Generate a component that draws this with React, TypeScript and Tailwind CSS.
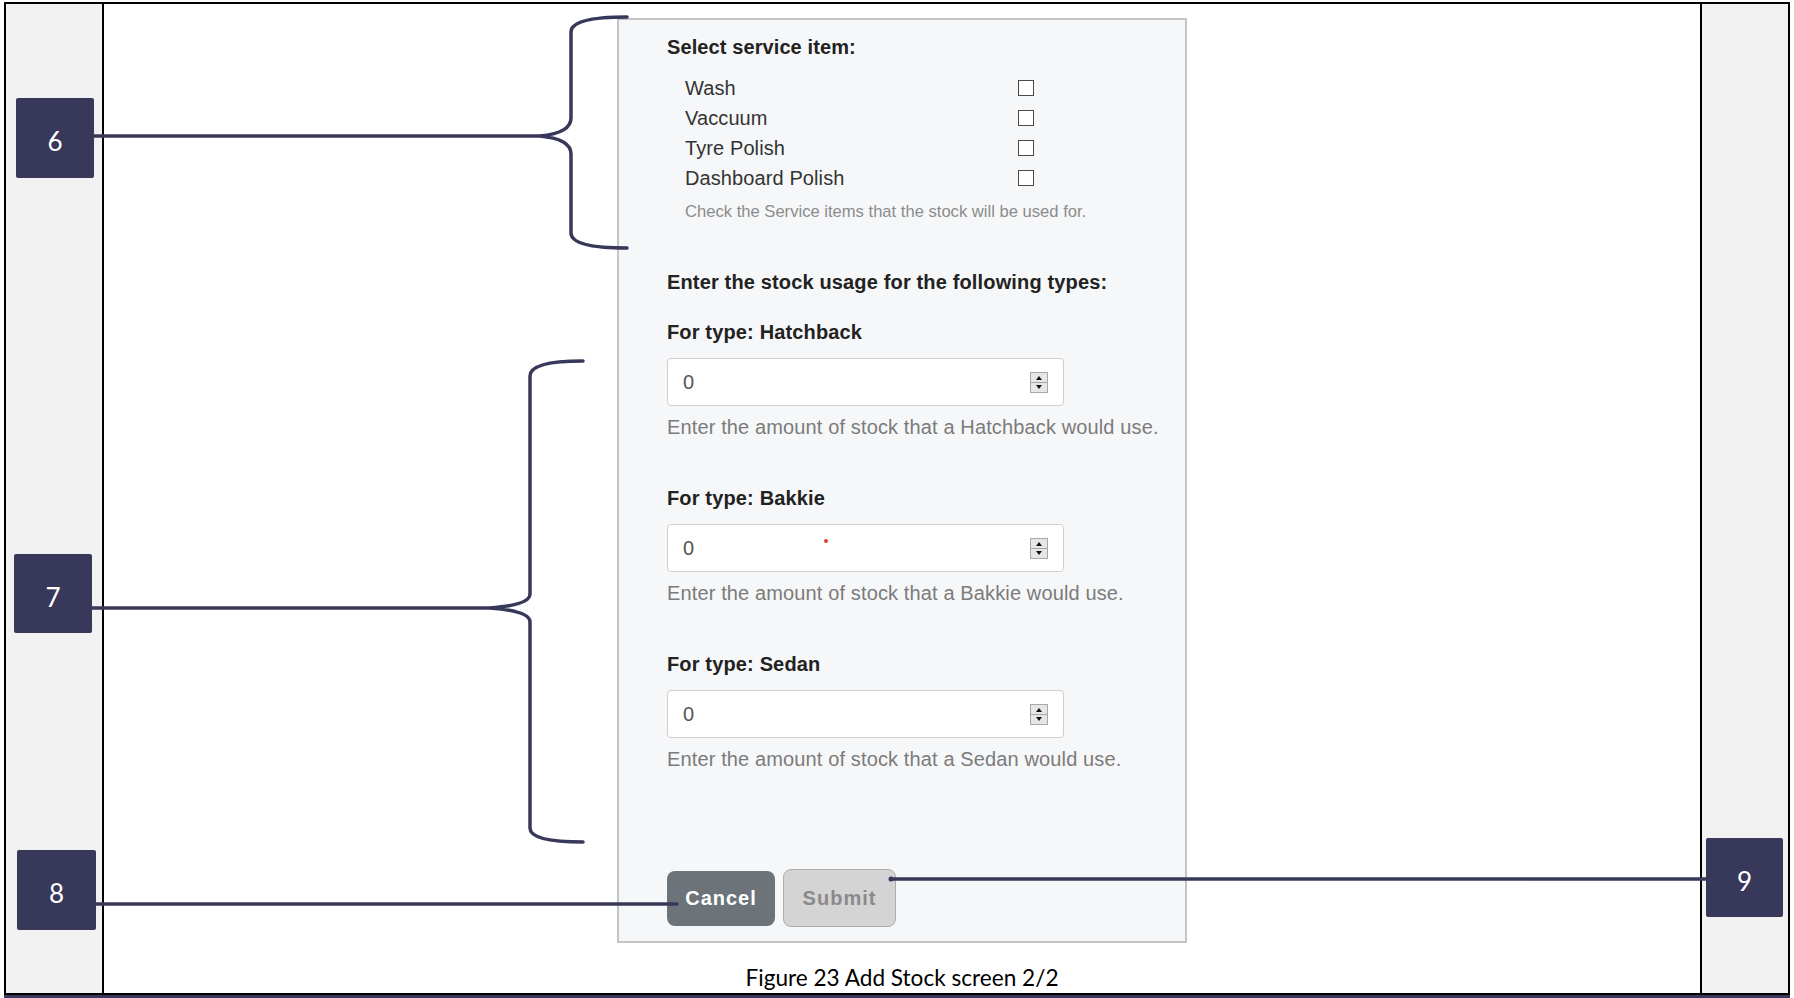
import React from "react";

const NAVY = "#37385a";

function Spinner() {
  return (
    <svg width="18" height="21" viewBox="0 0 18 21" className="block">
      <rect x="0.5" y="0.5" width="17" height="20" fill="#e6e6e6" stroke="#a8a8a8" />
      <line x1="1" y1="10.5" x2="17" y2="10.5" stroke="#a8a8a8" />
      <polygon points="6,8 12,8 9,4" fill="#111" />
      <polygon points="6,13 12,13 9,17" fill="#111" />
    </svg>
  );
}

function NumberField({ dot }: { dot?: boolean }) {
  return (
    <div className="relative w-[397px] h-[48px] border border-[#cfcfcf] rounded-[4px] bg-white flex items-center justify-between pl-[15px] pr-[15px]">
      <span className="text-[20px] text-[#555]">0</span>
      <Spinner />
      {dot && <span className="absolute left-[156px] top-[14px] w-[4px] h-[4px] rounded-full bg-[#d9402b]" />}
    </div>
  );
}

function Section({ type, mt }: { type: string; mt: string }) {
  return (
    <div className={mt}>
      <div className="h-[30px] leading-[30px] text-[20px] font-bold text-[#222] tracking-[0.15px]">For type: {type}</div>
      <div className="mt-[11px]">
        <NumberField dot={type === "Bakkie"} />
      </div>
      <div className="mt-[6px] h-[30px] leading-[30px] text-[20px] text-[#7b7b7b] whitespace-nowrap tracking-[0.13px]">
        Enter the amount of stock that a {type} would use.
      </div>
    </div>
  );
}

function Box({ n, cls }: { n: string; cls: string }) {
  return (
    <div
      className={`absolute flex items-center justify-center rounded-[2px] bg-[#37385a] text-white text-[26px] pt-[7px] font-['Lato'] ${cls}`}
    >
      {n}
    </div>
  );
}

export default function App() {
  const items = ["Wash", "Vaccuum", "Tyre Polish", "Dashboard Polish"];
  return (
    <div className="relative w-[1794px] h-[998px] bg-white overflow-hidden font-['Liberation_Sans',Arial,sans-serif]">
      <div className="pt-[2px] pl-[4px] w-[1790px]">
        <div className="h-[993px] border-2 border-black flex">
          <div className="w-[98px] h-full bg-[#f2f2f2] border-r-2 border-black" />
          <div className="flex-1 h-full flex flex-col items-center">
            <div className="mt-[14px] w-[570px] h-[925px] border-2 border-[#c4c4c4] bg-[#f6f7f8] pl-[48px] pt-[12px]">
              <div className="h-[30px] leading-[30px] text-[20px] font-bold text-[#222] tracking-[0.1px]">Select service item:</div>
              <div className="mt-[11px] pl-[18px]">
                {items.map((it) => (
                  <div key={it} className="h-[30px] flex items-center">
                    <span className="w-[333px] text-[20px] text-[#333] leading-[30px] tracking-[0.1px]">{it}</span>
                    <span className="w-[16px] h-[16px] border-[1.5px] border-[#4a4a4a] bg-white" />
                  </div>
                ))}
                <div className="mt-[8px] h-[22px] leading-[22px] text-[16.6px] text-[#8c8c8c] whitespace-nowrap">
                  Check the Service items that the stock will be used for.
                </div>
              </div>
              <div className="mt-[44px] h-[30px] leading-[30px] text-[20px] font-bold text-[#222] tracking-[0.15px] whitespace-nowrap">
                Enter the stock usage for the following types:
              </div>
              <Section type="Hatchback" mt="mt-[20px]" />
              <Section type="Bakkie" mt="mt-[41px]" />
              <Section type="Sedan" mt="mt-[41px]" />
              <div className="mt-[95px] h-[58px] flex items-center gap-[8px]">
                <button className="w-[108px] h-[55px] rounded-[8px] bg-[#6c7479] text-white font-bold text-[20px] tracking-[1px]">
                  Cancel
                </button>
                <button className="w-[113px] h-[58px] rounded-[8px] bg-[#d4d4d4] border border-[#adadad] text-[#8a8a8a] font-bold text-[20px] tracking-[1px]">
                  Submit
                </button>
              </div>
            </div>
            <div className="mt-[21px] h-[28px] leading-[28px] text-[22.6px] text-black font-['Lato'] whitespace-nowrap">
              Figure 23 Add Stock screen 2/2
            </div>
          </div>
          <div className="w-[88px] h-full bg-[#f2f2f2] border-l-2 border-black" />
        </div>
      </div>
      <div className="ml-[4px] w-[1786px] h-[3px] bg-[#37385a]" />

      <svg className="absolute left-0 top-0 pointer-events-none" width="1794" height="998" viewBox="0 0 1794 998">
        <g fill="none" stroke={NAVY} strokeWidth="3.5" strokeLinecap="round">
          <path d="M94 136 L540 136" />
          <path d="M627 17 Q571 17 571 32 L571 118 Q571 133 540 136 Q571 139 571 154 L571 233 Q571 248 627 248" />
          <path d="M92 608 L490 608" />
          <path d="M583 361 Q530 361 530 376 L530 594 Q530 605 490 608 Q530 611 530 622 L530 828 Q530 842 583 842" />
          <path d="M96 904 L677 904" />
          <path d="M891 879 L1706 879" />
        </g>
        <circle cx="891" cy="879" r="2.5" fill={NAVY} />
      </svg>

      <Box n="6" cls="left-[16px] top-[98px] w-[78px] h-[80px]" />
      <Box n="7" cls="left-[14px] top-[554px] w-[78px] h-[79px]" />
      <Box n="8" cls="left-[17px] top-[850px] w-[79px] h-[80px]" />
      <Box n="9" cls="left-[1706px] top-[838px] w-[77px] h-[79px]" />
    </div>
  );
}
